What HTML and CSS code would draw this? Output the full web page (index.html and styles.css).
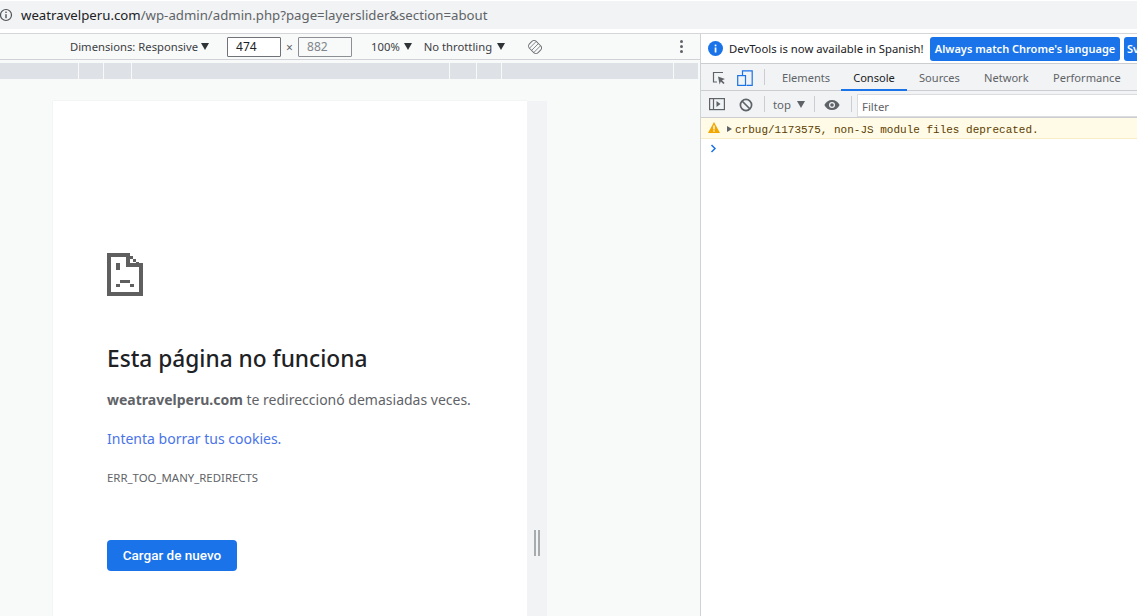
FILE: index.html
```html
<!DOCTYPE html>
<html lang="es">
<head>
<meta charset="utf-8">
<title>weatravelperu.com</title>
<link rel="stylesheet" href="styles.css">
</head>
<body>
<header class="address-bar">
  <svg class="info-icon" width="14" height="14" viewBox="0 0 14 14"><circle cx="6" cy="7" r="5.5" fill="none" stroke="#4f5357" stroke-width="1.2"/><rect x="5.3" y="6.200" width="1.4" height="4" fill="#4f5357"/><rect x="5.3" y="3.600" width="1.4" height="1.4" fill="#4f5357"/></svg>
  <span class="url"><span class="domain">weatravelperu.com</span>/wp-admin/admin.php?page=layerslider&amp;section=about</span>
</header>
<div class="gap-strip"></div>
<main class="split">
  <section class="device-pane">
    <div class="device-toolbar">
      <span class="dim-label">Dimensions: Responsive</span><span class="caret caret-dim"></span>
      <span class="size-box size-w">474</span>
      <span class="times">×</span>
      <span class="size-box size-h">882</span>
      <span class="zoom-label">100%</span><span class="caret caret-zoom"></span>
      <span class="throttle">No throttling</span><span class="caret caret-throttle"></span>
      <svg class="rotate" width="14" height="14" viewBox="0 0 16 16"><g transform="rotate(-45 8 8)" fill="none" stroke="#6e7175"><rect x="2.500" y="1" width="11" height="14" rx="3.500" stroke-width="1.100"/><path d="M2.500 4.500h11M2.500 8h11M2.500 11.500h11" stroke-width=".9"/></g></svg>
      <span class="kebab"><i></i><i></i><i></i></span>
    </div>
    <div class="ruler"><i></i><i></i><i></i><i></i><i></i><i></i><i></i><i></i></div>
    <div class="stage">
      <div class="viewport">
        <div class="error-page">
          <svg class="sad-icon" width="36" height="43" viewBox="0 0 36 43" shape-rendering="crispEdges" fill="#5f5f5f">
            <rect x="0" y="0" width="23" height="4"/><rect x="0" y="0" width="4" height="43"/><rect x="0" y="39" width="36" height="4"/><rect x="32" y="12" width="4" height="31"/>
            <rect x="19" y="0" width="4" height="14"/><rect x="19" y="10" width="17" height="4"/>
            <rect x="23" y="3" width="3" height="3"/><rect x="26" y="6" width="3" height="3"/><rect x="29" y="9" width="3" height="3"/>
            <rect x="9" y="10" width="4" height="7"/>
            <rect x="13" y="27" width="10" height="3"/><rect x="9" y="31" width="4" height="3"/><rect x="23" y="31" width="4" height="3"/>
          </svg>
          <h1 class="error-title">Esta página no funciona</h1>
          <p class="error-line"><strong>weatravelperu.com</strong> te redireccionó demasiadas veces.</p>
          <p class="error-link">Intenta borrar tus cookies.</p>
          <p class="error-code">ERR_TOO_MANY_REDIRECTS</p>
          <button class="reload" type="button">Cargar de nuevo</button>
        </div>
      </div>
      <div class="device-scroll"><span class="grip"></span></div>
    </div>
  </section>
  <section class="devtools">
    <div class="infobar">
      <svg class="info-badge" width="15" height="15" viewBox="0 0 15 15"><circle cx="7.5" cy="7.5" r="7.5" fill="#1a73e8"/><rect x="6.700" y="6.500" width="1.700" height="5" fill="#fff"/><rect x="6.700" y="3.600" width="1.700" height="1.700" fill="#fff"/></svg>
      <span class="info-text">DevTools is now available in Spanish!</span>
      <span class="info-btn">Always match Chrome's language</span>
      <span class="info-btn info-btn-clip">Sv</span>
    </div>
    <nav class="tabs">
      <svg class="tool-icon" width="16" height="16" viewBox="0 0 16 16" fill="none"><path d="M12 2.500H2.500v9.500H6" stroke="#5f6368" stroke-width="1.200"/><path d="M7 6.500l7 2.600-3 1.200 2.600 2.600-1.200 1.200-2.600-2.600-1.200 3z" fill="#5f6368"/></svg>
      <svg class="tool-icon device-icon" width="16" height="16" viewBox="0 0 16 16" fill="none" stroke="#1a73e8" stroke-width="1.200"><path d="M5.500 5V.8h9.700v14.600H9.500"/><rect x=".7" y="5.600" width="7.800" height="9.800"/></svg>
      <span class="vsep vsep-tabs"></span>
      <span class="tab tab-elements">Elements</span>
      <span class="tab tab-active">Console</span>
      <span class="tab tab-sources">Sources</span>
      <span class="tab tab-network">Network</span>
      <span class="tab tab-perf">Performance</span>
    </nav>
    <div class="console-bar">
      <svg width="16" height="14" viewBox="0 0 16 14" fill="none" class="sidebar-icon"><rect x=".6" y="1.600" width="14.800" height="11" stroke="#5f6368" stroke-width="1.200"/><path d="M4.500 1.600v11" stroke="#5f6368" stroke-width="1.200"/><path d="M7.500 4l4 3-4 3z" fill="#5f6368"/></svg>
      <svg width="14" height="14" viewBox="0 0 14 14" fill="none" class="clear-icon" stroke="#5f6368" stroke-width="1.700"><circle cx="7" cy="7" r="5.600"/><path d="M3 3l8 8"/></svg>
      <span class="vsep vsep-a"></span>
      <span class="top-label">top</span><span class="caret caret-top"></span>
      <span class="vsep vsep-b"></span>
      <svg width="16" height="12" viewBox="0 0 16 12" class="eye-icon"><path d="M8 1C4.600 1 1.700 3 .4 6c1.300 3 4.200 5 7.600 5s6.300-2 7.600-5C14.300 3 11.400 1 8 1z" fill="#5f6368"/><circle cx="8" cy="6" r="3" fill="#f1f3f4"/><circle cx="8" cy="6" r="1.800" fill="#5f6368"/></svg>
      <span class="vsep vsep-c"></span>
      <span class="filter">Filter</span>
    </div>
    <div class="warn-row">
      <svg width="12" height="11" viewBox="0 0 12 11" class="warn-icon"><path d="M6 0l6 11H0z" fill="#f2a600"/><rect x="5.300" y="3.500" width="1.400" height="4" fill="#fff"/><rect x="5.300" y="8.300" width="1.400" height="1.400" fill="#fff"/></svg>
      <span class="tri"></span>
      <span class="warn-text">crbug/1173575, non-JS module files deprecated.</span>
    </div>
    <div class="prompt"><svg width="7" height="9" viewBox="0 0 7 9" fill="none"><path d="M1.500 1l3.500 3.500L1.500 8" stroke="#1a73e8" stroke-width="1.500"/></svg></div>
  </section>
</main>
</body>
</html>
```
FILE: styles.css
```css
* { box-sizing: border-box; }
html, body { margin: 0; height: 100%; overflow: hidden; }
body {
  width: 1137px;
  height: 616px;
  background: #fff;
  font-family: "Noto Sans", "Open Sans", sans-serif;
  display: flex;
  flex-direction: column;
}
.address-bar {
  height: 28px;
  margin-top: 1px;
  flex: none;
  background: #f1f3f4;
  display: flex;
  align-items: center;
  gap: 7px;
}
.url {
  font-size: 13.230px;
  color: #5f6368;
  white-space: nowrap;
}
.domain { color: #202124; }
.gap-strip { flex: none; background: #fff; border-bottom: 1px solid #d4d6d9; height: 5px; }
.split { flex: 1; display: flex; min-height: 0; }

.device-pane { width: 701px; flex: none; display: flex; flex-direction: column; background: #f8f9f9; border-right: 1px solid #d0d3d6; }
.device-toolbar {
  height: 26px;
  flex: none;
  border-bottom: 1px solid #cfd2d6;
  display: flex;
  align-items: center;
  font-size: 11.250px;
  color: #3c4043;
  padding-left: 70px;
  white-space: nowrap;
}
.caret { width: 0; height: 0; border-left: 4px solid transparent; border-right: 4px solid transparent; border-top: 7px solid #303336; flex: none; }
.caret-dim { margin-left: 3px; }
.size-box { width: 54px; height: 20px; border: 1px solid #6f7276; border-radius: 1px; background: #fff; font-size: 12px; padding-left: 8px; line-height: 18px; }
.size-w { margin-left: 18px; color: #202124; }
.times { margin: 2px 5px 0; color: #5f6368; font-size: 12px; width: 7px; }
.size-h { color: #80868b; border-color: #8c8f93; background: #f8f9f9; }
.zoom-label { margin-left: 19px; }
.caret-zoom { margin-left: 4px; }
.throttle { margin-left: 12px; }
.caret-throttle { margin-left: 5px; }
.rotate { margin-left: 23px; flex: none; }
.kebab { margin-left: 138px; display: flex; flex-direction: column; gap: 2px; }
.kebab i { width: 3px; height: 3px; background: #5f6368; display: block; border-radius: 50%; }

.ruler {
  flex: none;
  height: 16px;
  margin-top: 3px;
  display: grid;
  grid-template-columns: 78px 24px 27px 317px 26px 24px 171px 24px;
  gap: 1px;
}
.ruler i { background: #dee1e6; display: block; }

.stage { flex: 1; display: flex; padding: 22px 0 0 53px; min-height: 0; overflow: hidden; }
.viewport { width: 474px; background: #fff; box-shadow: 0 0 1px #d8dadd; }
.error-page { padding: 152px 0 0 54px; color: #5f6368; }
.sad-icon { display: block; }
.error-title { margin: 48px 0 0; font-size: 22.700px; line-height: 30px; font-weight: 500; color: #202124; white-space: nowrap; }
.error-line { margin: 16px 0 0; font-size: 14px; line-height: 20px; white-space: nowrap; }
.error-line strong { font-weight: 700; }
.error-link { margin: 19px 0 0; font-size: 14px; line-height: 20px; color: #4a74e8; }
.error-code { margin: 21px 0 0; font-size: 11.400px; line-height: 16px; white-space: nowrap; }
.reload {
  display: block;
  margin-top: 54px;
  width: 130px;
  height: 31px;
  border: 0;
  border-radius: 4px;
  background: #1a73e8;
  color: #fff;
  font-family: Roboto, sans-serif;
  font-weight: 500;
  font-size: 13.500px;
  padding: 0 0 2px;
}
.device-scroll { width: 20px; background: #f1f3f4; position: relative; flex: none; }
.grip { position: absolute; left: 7px; top: 429px; width: 6px; height: 26px; border-left: 2px solid #a8abae; border-right: 2px solid #a8abae; }

.devtools { flex: 1; min-width: 0; display: flex; flex-direction: column; overflow: hidden; background: #fff; }
.infobar { height: 30px; flex: none; display: flex; align-items: center; padding-left: 7px; border-bottom: 1px solid #cbcdd1; font-size: 11.300px; color: #202124; white-space: nowrap; }
.info-badge { flex: none; }
.info-text { margin-left: 6px; flex: none; width: 195px; }
.info-btn { margin-left: 6px; height: 24px; line-height: 23px; width: 190px; flex: none; text-align: center; background: #1a73e8; color: #fff; border-radius: 3px; font-weight: 600; font-size: 11px; }
.info-btn-clip { margin-left: 4px; width: 40px; text-align: left; padding-left: 3px; }
.tabs { height: 27px; flex: none; background: #f1f3f4; border-bottom: 1px solid #cbcdd1; display: flex; align-items: center; position: relative; font-size: 11.100px; color: #5f6368; }
.tool-icon { position: absolute; top: 6px; left: 10px; }
.device-icon { left: 36px; }
.vsep { width: 1px; height: 16px; background: #cbcdd1; position: absolute; top: 5px; }
.vsep-tabs { left: 63px; }
.tab { position: absolute; top: 1px; height: 26px; line-height: 26px; white-space: nowrap; }
.tab-elements { left: 81px; }
.tab-active { left: 140px; width: 66px; text-align: center; color: #202124; border-bottom: 2px solid #1a73e8; }
.tab-sources { left: 218px; }
.tab-network { left: 283px; }
.tab-perf { left: 352px; }
.console-bar { height: 27px; flex: none; background: #f1f3f4; border-bottom: 1px solid #cbcdd1; position: relative; font-size: 11.400px; color: #5f6368; }
.sidebar-icon { position: absolute; left: 8px; top: 6px; }
.clear-icon { position: absolute; left: 38px; top: 7px; }
.vsep-a { left: 63px; }
.top-label { position: absolute; left: 72px; top: 6px; }
.caret-top { position: absolute; left: 96px; top: 10px; border-top-color: #5f6368; }
.vsep-b { left: 113px; }
.eye-icon { position: absolute; left: 123px; top: 8px; }
.vsep-c { left: 150px; }
.filter { position: absolute; left: 156px; top: 3px; right: -4px; height: 23px; line-height: 23px; padding-left: 4px; background: #fff; border: 1px solid #dadce0; color: #5f6368; }
.warn-row { height: 21px; flex: none; background: #fffbe6; border-bottom: 1px solid #f7eec6; display: flex; align-items: center; padding: 1px 0 0 7px; }
.warn-icon { flex: none; margin-top: -2px; }
.tri { width: 0; height: 0; border-top: 3.500px solid transparent; border-bottom: 3.500px solid transparent; border-left: 5px solid #5f6368; margin-left: 7px; }
.warn-text { font-family: "Liberation Mono", monospace; font-size: 11px; color: #5c3c00; margin-left: 3px; white-space: nowrap; position: relative; top: 1px; }
.prompt { padding: 5px 0 0 9px; line-height: 0; }
```
